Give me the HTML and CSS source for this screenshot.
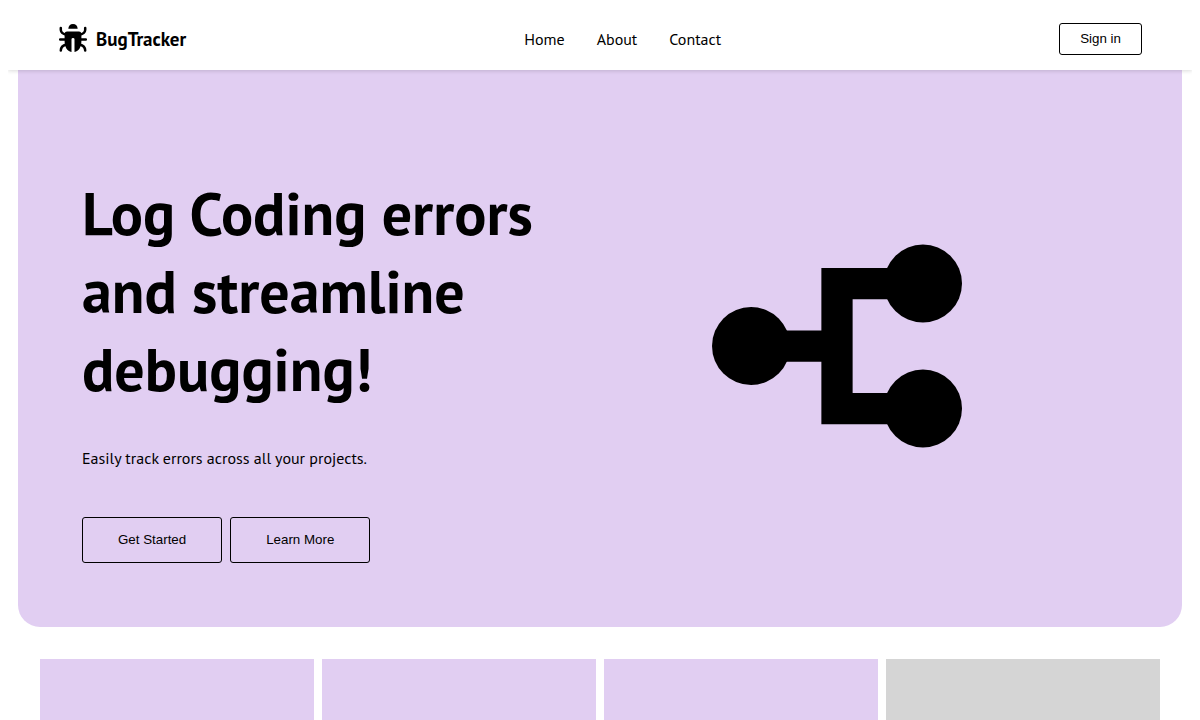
FILE: index.html
```html
<!DOCTYPE html>
<html lang="en">
<head>
<meta charset="utf-8">
<meta name="viewport" content="width=device-width, initial-scale=1">
<title>BugTracker</title>
<link rel="stylesheet" href="styles.css">
</head>
<body>
<header class="navbar">
  <div class="brand">
    <svg class="brand-icon" viewBox="0 0 30 30" aria-hidden="true">
      <path d="M10.3 4.8Q10.7 0 15 0T19.7 4.8Z"/>
      <path d="M6.6 10Q6.8 7.6 9 7.6H21Q23.2 7.6 23.4 10V17C23.4 23 20.9 27 16.5 28V15.2Q16.5 14 15 14T13.5 15.2V28C9.1 27 6.6 23 6.6 17Z"/>
      <path class="legs" d="M2.8 4V6Q3 9.4 8.5 10.8M27.2 4V6Q27 9.4 21.5 10.8M2.2 15.5H8M21.8 15.5H27.8M8.5 20.5Q2.8 21.8 2.8 26.6M21.5 20.5Q27.2 21.8 27.2 26.6"/>
    </svg>
    <span class="brand-name">BugTracker</span>
  </div>
  <nav class="nav-links">
    <a href="#home">Home</a>
    <a href="#about">About</a>
    <a href="#contact">Contact</a>
  </nav>
  <button class="btn btn-small" type="button">Sign in</button>
</header>
<main>
  <section class="hero" id="home">
    <div class="hero-text">
      <h1>Log Coding errors and streamline debugging!</h1>
      <p>Easily track errors across all your projects.</p>
      <div class="actions">
        <button class="btn btn-large" type="button">Get Started</button>
        <button class="btn btn-large" type="button">Learn More</button>
      </div>
    </div>
    <svg class="hero-icon" viewBox="0 0 16 16" aria-hidden="true">
      <circle cx="2.5" cy="8" r="2.5"/>
      <circle cx="13.5" cy="4" r="2.5"/>
      <circle cx="13.5" cy="12" r="2.5"/>
      <path d="M2.5 7H7V3H13.5V5H9V11H13.5V13H7V9H2.5Z"/>
    </svg>
  </section>
  <section class="cards" id="about">
    <div class="card"></div>
    <div class="card"></div>
    <div class="card"></div>
    <div class="card card-muted"></div>
  </section>
</main>
</body>
</html>
```
FILE: styles.css
```css
body {
  color: #000;
  background: #fff;
  font-family: "PT Sans", "Noto Sans", sans-serif;
  font-size: 16px;
  line-height: 22px;
}

.navbar {
  position: relative;
  display: flex;
  align-items: center;
  justify-content: space-between;
  padding: 15px 50px;
  background: #fff;
  box-shadow: 0 1px 4px rgba(0, 0, 0, 0.15);
}

.brand {
  display: flex;
  align-items: center;
  gap: 8px;
}

.brand-icon {
  width: 30px;
  height: 30px;
}

.legs {
  fill: none;
  stroke: #000;
  stroke-width: 2.5;
  stroke-linecap: round;
}

.brand-name {
  font-size: 19px;
  font-weight: 700;
}

.nav-links {
  display: flex;
  gap: 32px;
}

.nav-links a {
  color: inherit;
  text-decoration: none;
}

.btn {
  color: #000;
  background: transparent;
  border: 1px solid #000;
  border-radius: 3px;
  font-family: "Liberation Sans", Arial, sans-serif;
  line-height: 14px;
}

.btn-small {
  padding: 8px 20px;
}

.btn-large {
  padding: 15px 35px;
}

.hero {
  display: grid;
  grid-template-columns: 11fr 13fr;
  align-items: center;
  margin: 0 10px;
  padding: 58px 64px 64px;
  background: #e1cef2;
  border-radius: 0 0 22px 22px;
}

.hero h1 {
  margin: 46px 0 39px;
  font-size: 60px;
  font-weight: 700;
  line-height: 78px;
}

.hero p {
  margin: 0 0 48px;
}

.actions {
  display: flex;
  gap: 8px;
}

.hero-icon {
  width: 250px;
  justify-self: center;
}

.cards {
  display: grid;
  grid-template-columns: repeat(4, 1fr);
  gap: 8px;
  padding: 32px;
}

.card {
  min-height: 160px;
  background: #e1cef2;
}

.card-muted {
  background: #d5d5d5;
}
```
